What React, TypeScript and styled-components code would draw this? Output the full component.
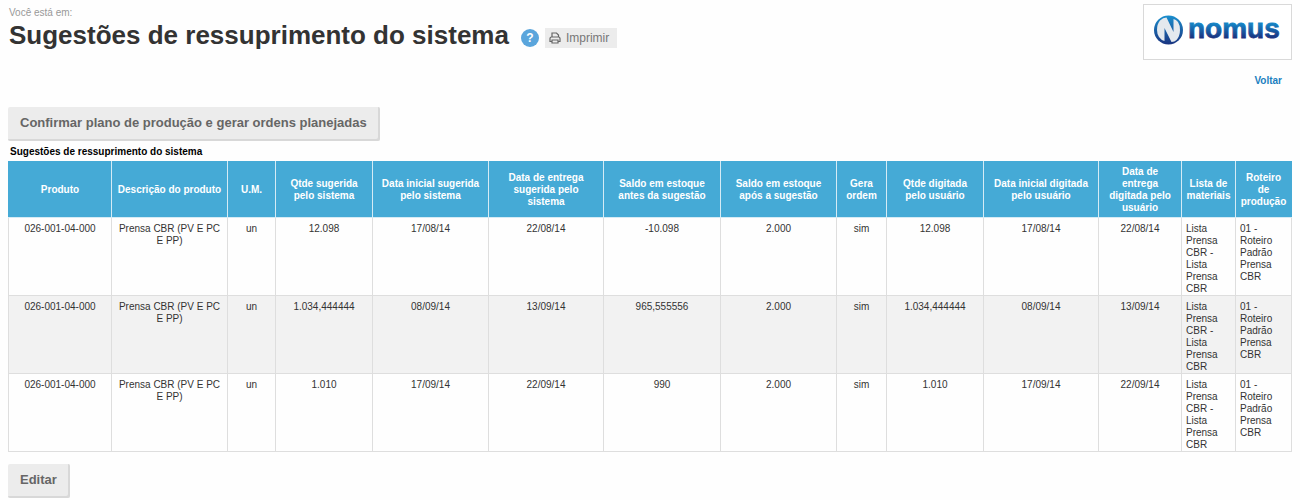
import React from "react";
import styled, { createGlobalStyle } from "styled-components";

const GlobalStyle = createGlobalStyle`
  * { box-sizing: border-box; }
  body {
    margin: 0;
    background: #fefefe;
    color: #333;
    font-family: "Liberation Sans", Arial, sans-serif;
    font-size: 10px;
    line-height: 12px;
  }
`;

const Page = styled.main`
  padding: 4px 8px 2px;
`;

const Header = styled.header`
  display: flex;
  justify-content: space-between;
  align-items: flex-start;
`;

const Heading = styled.div`
  display: flex;
  flex-direction: column;
  padding: 3px 0 0 1px;
`;

const Breadcrumb = styled.span`
  color: #999;
`;

const TitleRow = styled.div`
  display: flex;
  align-items: center;
`;

const Title = styled.h1`
  margin: 0;
  font-size: 26px;
  line-height: 32px;
  color: #333;
`;

const HelpButton = styled.button`
  width: 18px;
  height: 18px;
  margin: 6px 6px 0 12px;
  padding: 0;
  border: 0;
  border-radius: 50%;
  background: #5aa5dc;
  color: #fff;
  font: bold 12px/18px "Liberation Sans", Arial, sans-serif;
`;

const PrintButton = styled.button`
  display: flex;
  align-items: center;
  gap: 5px;
  height: 20px;
  margin-top: 6px;
  padding: 0 8px 0 4px;
  border: 0;
  background: #ececec;
  color: #777;
  font: 12px/20px "Liberation Sans", Arial, sans-serif;
`;

const Brand = styled.div`
  display: flex;
  flex-direction: column;
  align-items: flex-end;
  gap: 15px;
`;

const LogoBox = styled.div`
  display: flex;
  width: 149px;
  height: 56px;
  border: 1px solid #d9d9d9;
  background: #fff;
`;

const BackLink = styled.a`
  margin-right: 10px;
  color: #1b7fc0;
  font-weight: bold;
  text-decoration: none;
`;

const ActionButton = styled.button`
  display: block;
  height: 34px;
  padding: 0 13px 2px 12px;
  border: 0;
  border-radius: 2px;
  background: #ececec;
  box-shadow: inset -2px -2px 0 #d8d8d8;
  color: #666;
  font: bold 13px/32px "Liberation Sans", Arial, sans-serif;
`;

const TopActions = styled.div`
  padding-top: 20px;
`;

const BottomActions = styled.div`
  padding-top: 12px;
`;

const Table = styled.table`
  width: 100%;
  table-layout: fixed;
  border-collapse: collapse;
`;

const Caption = styled.caption`
  padding: 5px 2px 3px;
  color: #000;
  font-weight: bold;
  text-align: left;
`;

const Column = styled.col<{ $width: number }>`
  width: ${(p) => p.$width}px;
`;

const HeadCell = styled.th`
  height: 56px;
  padding: 0 5px;
  border: 1px solid #d5ebf5;
  border-top-color: #45aad6;
  background: #45aad6;
  color: #fff;
  text-align: center;
  vertical-align: middle;

  &:first-child { border-left-color: #45aad6; }
  &:last-child { border-right-color: #45aad6; }
  &:nth-last-child(-n + 2) { padding: 0 4px; }
`;

const Row = styled.tr`
  &:nth-child(even) { background: #f2f2f2; }
`;

const Cell = styled.td<{ $align?: string }>`
  padding: 5px 4px 0;
  border: 1px solid #dedede;
  text-align: ${(p) => p.$align ?? "center"};
  vertical-align: top;
`;

const columns = [
  { label: "Produto", width: 103 },
  { label: "Descrição do produto", width: 116 },
  { label: "U.M.", width: 48 },
  { label: "Qtde sugerida pelo sistema", width: 97 },
  { label: "Data inicial sugerida pelo sistema", width: 116 },
  { label: "Data de entrega sugerida pelo sistema", width: 115 },
  { label: "Saldo em estoque antes da sugestão", width: 117 },
  { label: "Saldo em estoque após a sugestão", width: 116 },
  { label: "Gera ordem", width: 50 },
  { label: "Qtde digitada pelo usuário", width: 97 },
  { label: "Data inicial digitada pelo usuário", width: 115 },
  { label: "Data de entrega digitada pelo usuário", width: 83 },
  { label: "Lista de materiais", width: 54 },
  { label: "Roteiro de produção", width: 56 },
];

const suggestions = [
  { qty: "12.098", start: "17/08/14", delivery: "22/08/14", before: "-10.098" },
  { qty: "1.034,444444", start: "08/09/14", delivery: "13/09/14", before: "965,555556" },
  { qty: "1.010", start: "17/09/14", delivery: "22/09/14", before: "990" },
];

const PrinterIcon = () => (
  <svg width="12" height="12" viewBox="0 0 12 12" fill="none" stroke="#666" strokeWidth="1.2" aria-hidden="true">
    <path d="M3 5V1h4.500l2 2v2" />
    <path d="M3 9.500H1V6.500Q1 5 2.500 5h7Q11 5 11 6.500v3H9" />
    <path d="M3 8h6v3H3z" />
  </svg>
);

const NomusLogo = () => (
  <svg width="147" height="54" viewBox="0 0 147 54" role="img" aria-label="nomus">
    <defs>
      <linearGradient id="word" x1="0" y1="0" x2="0" y2="1">
        <stop offset="0.35" stopColor="#1583c4" />
        <stop offset="0.85" stopColor="#1b2a78" />
      </linearGradient>
      <linearGradient id="ball" x1="0" y1="0" x2="0" y2="1">
        <stop offset="0" stopColor="#1b8fce" />
        <stop offset="1" stopColor="#1a3480" />
      </linearGradient>
    </defs>
    <circle cx="24.500" cy="25" r="14.500" fill="url(#ball)" />
    <path
      d="M16 15.500Q19 12.500 22.500 12.500L29.500 27V14Q32 14.500 34 17Q36 20 36 25Q36 31 32.500 35Q30.500 37 27.500 37L20.500 23V36Q17 35 15 32Q13 29 13 25Q13 19 16 15.500z"
      fill="#e4e9ee"
    />
    <text
      x="44"
      y="33"
      fontFamily="Liberation Sans, Arial, sans-serif"
      fontSize="28"
      fontWeight="bold"
      fill="url(#word)"
      stroke="url(#word)"
      strokeWidth="0.8"
    >
      nomus
    </text>
  </svg>
);

export default function App() {
  return (
    <>
      <GlobalStyle />
      <Page>
        <Header>
          <Heading>
            <Breadcrumb>Você está em:</Breadcrumb>
            <TitleRow>
              <Title>Sugestões de ressuprimento do sistema</Title>
              <HelpButton type="button">?</HelpButton>
              <PrintButton type="button">
                <PrinterIcon />
                Imprimir
              </PrintButton>
            </TitleRow>
          </Heading>
          <Brand>
            <LogoBox>
              <NomusLogo />
            </LogoBox>
            <BackLink href="#">Voltar</BackLink>
          </Brand>
        </Header>
        <TopActions>
          <ActionButton type="button">
            Confirmar plano de produção e gerar ordens planejadas
          </ActionButton>
        </TopActions>
        <Table>
          <Caption>Sugestões de ressuprimento do sistema</Caption>
          <colgroup>
            {columns.map((c) => (
              <Column key={c.label} $width={c.width} />
            ))}
          </colgroup>
          <thead>
            <tr>
              {columns.map((c) => (
                <HeadCell key={c.label} scope="col">{c.label}</HeadCell>
              ))}
            </tr>
          </thead>
          <tbody>
            {suggestions.map((s) => (
              <Row key={s.qty}>
                <Cell>026-001-04-000</Cell>
                <Cell>Prensa CBR (PV E PC E PP)</Cell>
                <Cell>un</Cell>
                <Cell>{s.qty}</Cell>
                <Cell>{s.start}</Cell>
                <Cell>{s.delivery}</Cell>
                <Cell>{s.before}</Cell>
                <Cell>2.000</Cell>
                <Cell>sim</Cell>
                <Cell>{s.qty}</Cell>
                <Cell>{s.start}</Cell>
                <Cell>{s.delivery}</Cell>
                <Cell $align="left">Lista Prensa CBR - Lista Prensa CBR</Cell>
                <Cell $align="left">01 - Roteiro Padrão Prensa CBR</Cell>
              </Row>
            ))}
          </tbody>
        </Table>
        <BottomActions>
          <ActionButton type="button">Editar</ActionButton>
        </BottomActions>
      </Page>
    </>
  );
}
